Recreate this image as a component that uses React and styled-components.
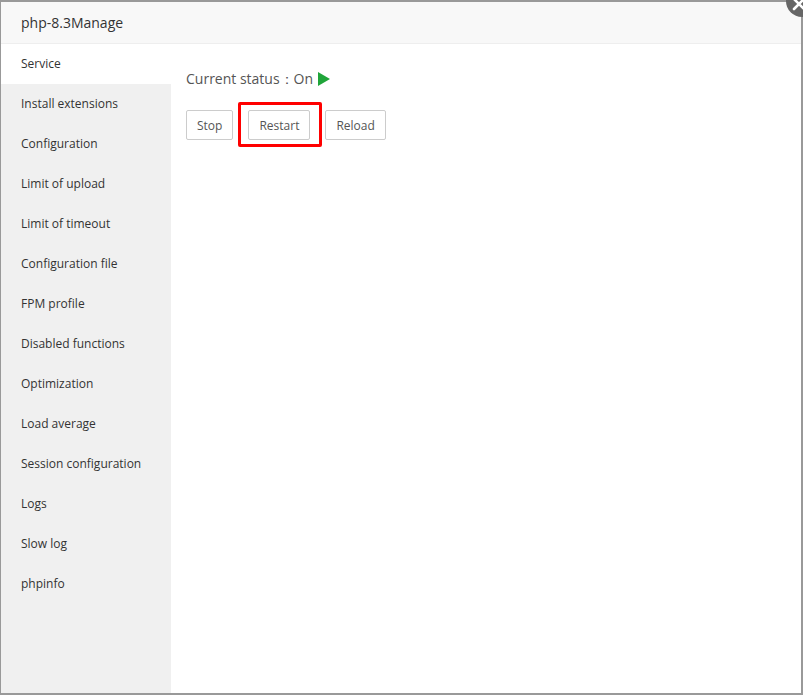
import styled, { createGlobalStyle } from "styled-components";

const GlobalStyle = createGlobalStyle`
  html, body {
    margin: 0;
    padding: 0;
    background: #999;
    font-family: "Open Sans", "Noto Sans", sans-serif;
    overflow: hidden;
  }
`;

const menu = [
  "Service",
  "Install extensions",
  "Configuration",
  "Limit of upload",
  "Limit of timeout",
  "Configuration file",
  "FPM profile",
  "Disabled functions",
  "Optimization",
  "Load average",
  "Session configuration",
  "Logs",
  "Slow log",
  "phpinfo",
];

function App() {
  return (
    <>
      <GlobalStyle />
      <Modal>
        <Header>php-8.3Manage</Header>
        <CloseBtn aria-label="close">
          <svg width="14" height="14" viewBox="0 0 14 14">
            <path d="M2 2L12 12M12 2L2 12" stroke="#fff" strokeWidth="2.6" strokeLinecap="round" />
          </svg>
        </CloseBtn>
        <Body>
          <Sidebar>
            {menu.map((item, i) => (
              <MenuItem key={item} $active={i === 0}>
                {item}
              </MenuItem>
            ))}
          </Sidebar>
          <Content>
            <Status>
              Current status：On
              <svg width="12" height="14" viewBox="0 0 12 14">
                <path d="M0 0L12 7L0 14Z" fill="#20a53a" />
              </svg>
            </Status>
            <Buttons>
              <Button>Stop</Button>
              <Marked>
                <Button>Restart</Button>
              </Marked>
              <Button>Reload</Button>
            </Buttons>
          </Content>
        </Body>
      </Modal>
    </>
  );
}

export default App;

const Modal = styled.div`
  position: relative;
  margin: 2px 2px 0 1px;
  width: 800px;
  height: 691px;
  background: #fff;
  display: flex;
  flex-direction: column;
`;

const Header = styled.div`
  height: 41px;
  line-height: 41px;
  padding-left: 20px;
  background: #f8f8f8;
  border-bottom: 1px solid #eee;
  font-size: 14px;
  color: #333;
`;

const CloseBtn = styled.div`
  position: absolute;
  top: -17px;
  right: -17px;
  width: 32px;
  height: 32px;
  border-radius: 50%;
  background: #666;
  display: flex;
  align-items: center;
  justify-content: center;
  svg {
    margin: 6px 6px 0 0;
  }
`;

const Body = styled.div`
  flex: 1;
  display: flex;
`;

const Sidebar = styled.div`
  width: 170px;
  background: #f0f0f0;
`;

const MenuItem = styled.div`
  height: 40px;
  line-height: 40px;
  padding-left: 20px;
  font-size: 12px;
  color: #333;
  background: ${(p) => (p.$active ? "#fff" : "transparent")};
`;

const Content = styled.div`
  flex: 1;
  padding: 15px;
`;

const Status = styled.div`
  height: 40px;
  display: flex;
  align-items: center;
  gap: 5px;
  font-size: 14px;
  color: #555;
`;

const Buttons = styled.div`
  margin-top: 11px;
  display: flex;
  gap: 15px;
`;

const Button = styled.button`
  height: 30px;
  padding: 0 10px;
  border: 1px solid #ccc;
  border-radius: 2px;
  background: #fff;
  color: #555;
  font-family: inherit;
  font-size: 12px;
`;

const Marked = styled.span`
  position: relative;
  display: inline-flex;
  &::after {
    content: "";
    position: absolute;
    top: -8px;
    bottom: -7px;
    left: -10px;
    right: -12px;
    border: 3px solid #f00;
    border-radius: 2px;
  }
`;
